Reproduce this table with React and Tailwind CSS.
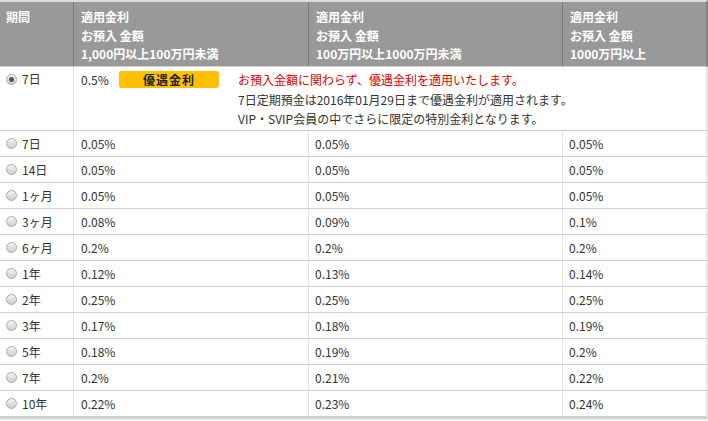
import React from 'react';

// 期間ごとの金利データ
const rates = [
  { term: '7日', a: '0.05%', b: '0.05%', c: '0.05%' },
  { term: '14日', a: '0.05%', b: '0.05%', c: '0.05%' },
  { term: '1ヶ月', a: '0.05%', b: '0.05%', c: '0.05%' },
  { term: '3ヶ月', a: '0.08%', b: '0.09%', c: '0.1%' },
  { term: '6ヶ月', a: '0.2%', b: '0.2%', c: '0.2%' },
  { term: '1年', a: '0.12%', b: '0.13%', c: '0.14%' },
  { term: '2年', a: '0.25%', b: '0.25%', c: '0.25%' },
  { term: '3年', a: '0.17%', b: '0.18%', c: '0.19%' },
  { term: '5年', a: '0.18%', b: '0.19%', c: '0.2%' },
  { term: '7年', a: '0.2%', b: '0.21%', c: '0.22%' },
  { term: '10年', a: '0.22%', b: '0.23%', c: '0.24%' },
];

const cols = 'grid grid-cols-[74px_235px_254px_143px]';

const Radio = ({ checked }) => (
  <span className="relative inline-block w-[11px] h-[11px] rounded-full border border-[#a9a9a9] bg-gradient-to-b from-[#f4f4f4] to-[#cfcfcf] shrink-0">
    {checked && (
      <span className="absolute left-[2px] top-[2px] w-[5px] h-[5px] rounded-full bg-[#555]" />
    )}
  </span>
);

const HeadCell = ({ lines, last }) => (
  <div className={`px-[7px] pt-[6px] leading-[18.5px] ${last ? '' : 'border-r border-r-[#7a7a7a]'}`}>
    {lines.map((l) => (
      <div key={l}>{l}</div>
    ))}
  </div>
);

const App = () => {
  return (
    <div
      className="w-[708px] h-[421px] overflow-hidden bg-[#f2f2f2] text-[12px] text-[#333]"
      style={{ fontFamily: '"Noto Sans CJK JP", "Liberation Sans", sans-serif' }}
    >
      {/* ヘッダー */}
      <div className={`${cols} w-[708px] h-[67px] border-t-2 border-t-[#dcdcdc] border-b border-b-[#cfcfcf] border-r-2 border-r-[#838383] bg-[#999999] text-white font-bold`}>
        <div className="pl-[6px] pt-[6px] leading-[18.5px] border-r border-r-[#7a7a7a]">期間</div>
        <HeadCell lines={['適用金利', 'お預入 金額', '1,000円以上100万円未満']} />
        <HeadCell lines={['適用金利', 'お預入 金額', '100万円以上1000万円未満']} />
        <HeadCell lines={['適用金利', 'お預入 金額', '1000万円以上']} last />
      </div>

      {/* 優遇金利の行 */}
      <div className="grid grid-cols-[74px_632px] w-[708px] h-[64px] bg-white border-b border-b-[#cfcfcf] border-r-2 border-r-[#e6e6e6]">
        <div className="flex items-start gap-[5px] pl-[6px] pt-[7px] border-r border-r-[#e3e3e3]">
          <Radio checked />
          <span className="leading-[12px] -mt-[1px]">7日</span>
        </div>
        <div className="flex items-start pl-[7px] pt-[3px]">
          <span className="w-[38px] leading-[20px]">0.5%</span>
          <span className="w-[100px] h-[17px] mt-[1px] rounded-[3px] bg-[#ffc000] text-[#222] font-bold text-center leading-[17px] tracking-[1px]">
            優遇金利
          </span>
          <div className="ml-[19px] leading-[19.5px]">
            <div className="text-[#e00000]">お預入金額に関わらず、優遇金利を適用いたします。</div>
            <div>7日定期預金は2016年01月29日まで優遇金利が適用されます。</div>
            <div>VIP・SVIP会員の中でさらに限定の特別金利となります。</div>
          </div>
        </div>
      </div>

      {/* 通常金利の行 */}
      {rates.map((r, i) => {
        const last = i === rates.length - 1;
        return (
          <div
            key={r.term}
            className={`${cols} w-[708px] bg-white border-r-2 border-r-[#e6e6e6] ${last ? 'h-[28px] border-b-[3px] border-b-[#d0d0d0]' : 'h-[26px] border-b border-b-[#cfcfcf]'}`}
          >
            <div className="flex items-center gap-[5px] pl-[6px] border-r border-r-[#e3e3e3]">
              <Radio />
              <span>{r.term}</span>
            </div>
            <div className="flex items-center pl-[7px] border-r border-r-[#e3e3e3]">{r.a}</div>
            <div className="flex items-center pl-[6px] border-r border-r-[#e3e3e3]">{r.b}</div>
            <div className="flex items-center pl-[6px]">{r.c}</div>
          </div>
        );
      })}
    </div>
  );
};

export default App;
